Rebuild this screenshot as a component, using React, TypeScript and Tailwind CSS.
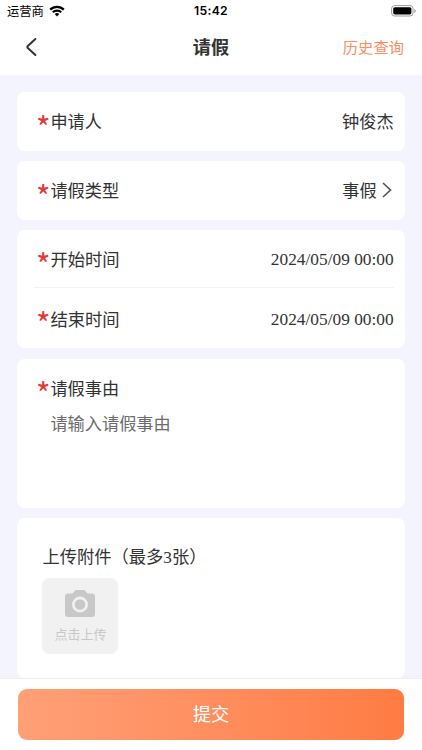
import type { ReactNode } from "react";

const Star = () => (
  <span className="w-[14.4px] h-[24px] shrink-0 pt-[5px] -ml-[0.4px] font-['Noto_Sans_CJK_SC',sans-serif] text-[31px] leading-[24px] text-[#e0393b]">*</span>
);

const Card = ({ children, className = "" }: { children: ReactNode; className?: string }) => (
  <div className={`bg-white rounded-[8px] pl-[19px] pr-[11px] ${className}`}>{children}</div>
);

const Row = ({ label, children, className = "" }: { label: string; children?: ReactNode; className?: string }) => (
  <div className={`flex items-center ${className}`}>
    <Star />
    <span className="leading-[24px] pt-[3px]">{label}</span>
    <div className="ml-auto flex items-center leading-[24px] pt-[3px]">{children}</div>
  </div>
);

// label sits a little lower than the serif date beside it
const DateRow = ({ label, value, className = "" }: { label: string; value: string; className?: string }) => (
  <div className={`flex items-center text-[17.33px] ${className}`}>
    <Star />
    <span className="leading-[24px] pt-[5px]">{label}</span>
    <span className="ml-auto leading-[24px] pt-[3px]">{value}</span>
  </div>
);

const StatusBar = () => (
  <div className="grid grid-cols-3 items-center h-[22px] px-[7px] text-black">
    <div className="flex items-center gap-[5px] text-[12.3px]">
      运营商
      <svg className="-mt-[1px]" width="16" height="12" viewBox="0 0 16 12" fill="none" stroke="currentColor" strokeWidth="2.2">
        <path d="M1.2 4.6a9.6 9.6 0 0 1 13.6 0" />
        <path d="M3.8 7.3a5.9 5.9 0 0 1 8.4 0" />
        <path d="M8 11.4 5.7 9.1a3.2 3.2 0 0 1 4.6 0z" fill="currentColor" stroke="none" />
      </svg>
    </div>
    <div className="text-center font-['Inter','Liberation_Sans',sans-serif] text-[12.2px] font-semibold tracking-[0.3px]">15:42</div>
    <svg className="ml-auto -mr-[1px]" width="25" height="12" viewBox="0 0 25 12">
      <rect x="0.6" y="0.6" width="21.4" height="10.4" rx="3" fill="none" stroke="#9b9b9b" />
      <rect x="2.2" y="2.2" width="18.2" height="7.2" rx="1.6" fill="#000" />
      <path d="M23.3 4v4c.9-.3 1.4-1.1 1.4-2s-.5-1.7-1.4-2z" fill="#9b9b9b" />
    </svg>
  </div>
);

export default function App() {
  return (
    <div className="w-[422px] h-[750px] flex flex-col overflow-hidden bg-[#f4f4fe] font-['Liberation_Serif','Noto_Sans_CJK_SC',sans-serif] text-[17.2px] text-[#333]">
      <div className="bg-white h-[75px] shrink-0 font-['Noto_Sans_CJK_SC',sans-serif]">
        <StatusBar />
        <div className="grid grid-cols-3 items-center h-[50px] pl-[25px] pr-[18px]">
          <svg width="12" height="20" viewBox="0 0 12 20" fill="none" stroke="#333" strokeWidth="2" strokeLinecap="round" strokeLinejoin="round">
            <path d="M10.4 2 2.8 9a1.3 1.3 0 0 0 0 2l7.6 7" />
          </svg>
          <h1 className="text-center text-[18.2px] font-bold -ml-[7px]">请假</h1>
          <span className="text-right text-[15.3px] text-[#fb8d63] -mt-[2px]">历史查询</span>
        </div>
      </div>

      <div className="flex-1 min-h-0 flex flex-col gap-[10.2px] pt-[17px] px-[17.4px]">
        <Card>
          <Row label="申请人" className="h-[59px]">钟俊杰</Row>
        </Card>
        <Card>
          <Row label="请假类型" className="h-[59px]">
            事假
            <svg className="ml-[5px] mr-[2px] -mt-[4px]" width="10" height="16" viewBox="0 0 10 16" fill="none" stroke="#555" strokeWidth="1.7">
              <path d="m1 1 7.5 7L1 15" />
            </svg>
          </Row>
        </Card>
        <Card>
          <DateRow label="开始时间" value="2024/05/09 00:00" className="h-[57px]" />
          <div className="h-px -ml-[2px] bg-[#f3f3f5]" />
          <DateRow label="结束时间" value="2024/05/09 00:00" className="h-[60px]" />
        </Card>
        <Card className="h-[149px]">
          <Row label="请假事由" className="h-[59px]" />
          <div className="pl-[14px] -mt-[5px] leading-[24px] text-[#6c6c6c]">请输入请假事由</div>
        </Card>
        <Card className="h-[160px] shrink-0">
          <div className="pl-[6px] pt-[28px] leading-[24px] text-[17.3px]">上传附件（最多3张）</div>
          <div className="ml-[6px] mt-[8.3px] w-[76px] h-[76px] rounded-[8px] bg-[#f1f1f1] flex flex-col items-center pt-[12px] text-[#c8c8c8]">
            <svg width="30" height="27" viewBox="0 0 30 27">
              <path d="M10.5 0h9l3 3.5H27a3 3 0 0 1 3 3V24a3 3 0 0 1-3 3H3a3 3 0 0 1-3-3V6.5a3 3 0 0 1 3-3h4.5z" fill="currentColor" />
              <circle cx="15" cy="14.5" r="6.6" fill="none" stroke="#f1f1f1" strokeWidth="2.7" />
            </svg>
            <span className="mt-[8px] text-[13px] leading-[20px]">点击上传</span>
          </div>
        </Card>
      </div>

      <div className="h-[72px] shrink-0 bg-white border-t border-[#efeff3] pt-[10px] px-[18px]">
        <button className="block w-full h-[50.5px] pt-[3px] rounded-[9px] bg-linear-to-r from-[#ffa077] to-[#ff7b42] text-white text-[18.2px]">提交</button>
      </div>
    </div>
  );
}
